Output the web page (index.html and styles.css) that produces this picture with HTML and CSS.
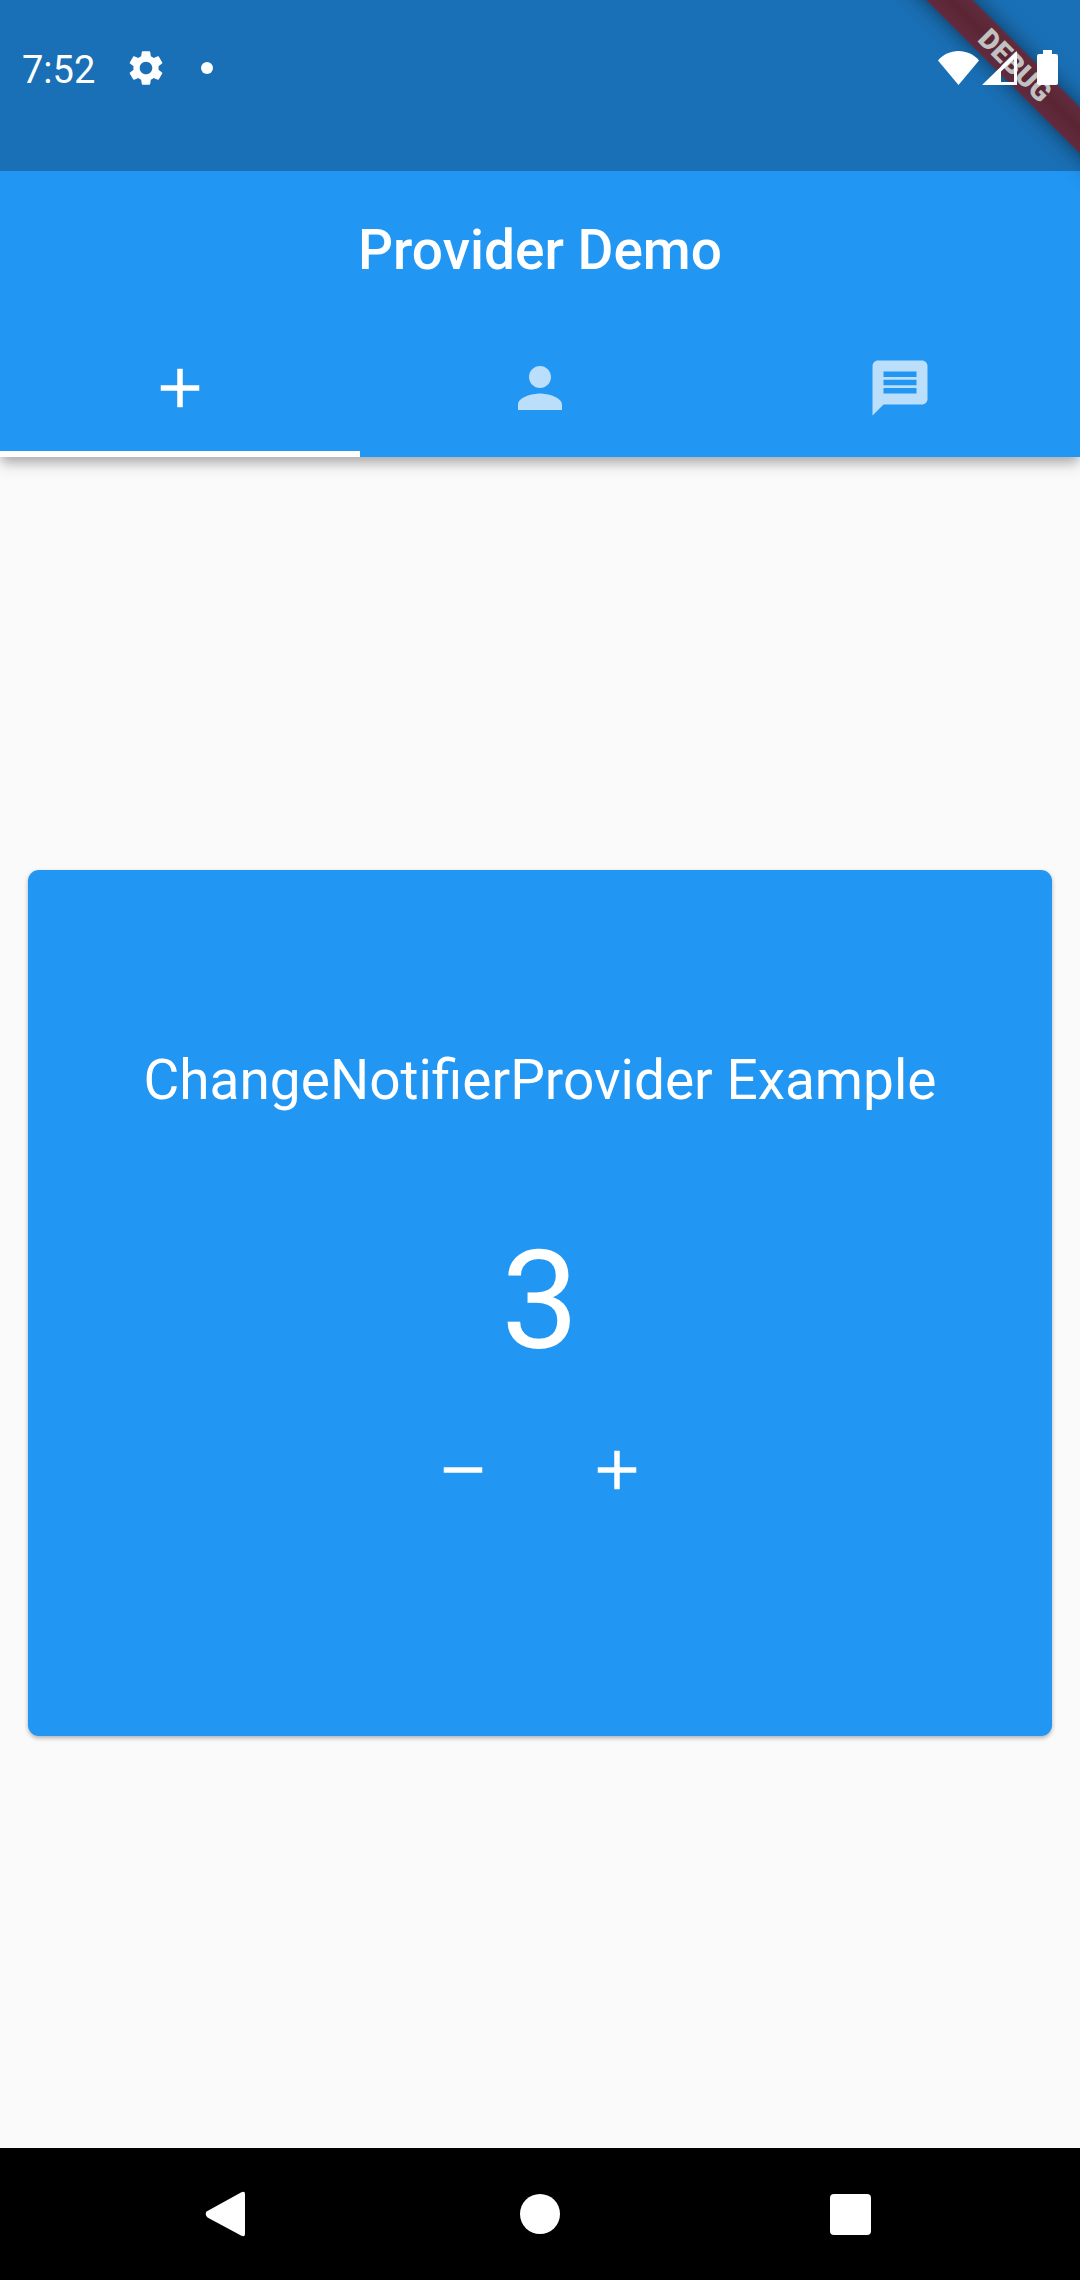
FILE: index.html
```html
<!DOCTYPE html>
<html lang="en">
<head>
<meta charset="utf-8">
<meta name="viewport" content="width=device-width, initial-scale=1">
<title>Provider Demo</title>
<link rel="stylesheet" href="styles.css">
</head>
<body>
<div class="screen">
  <div class="debug-corner"><div class="debug-banner">DEBUG</div></div>

  <header class="app-bar">
    <div class="status-bar">
      <div class="status-left">
        <span class="clock">7:52</span>
        <svg class="gear" viewBox="0 0 24 24" aria-hidden="true"><path d="M19.14 12.94c.04-.3.06-.61.06-.94 0-.32-.02-.64-.07-.94l2.03-1.58c.18-.14.23-.41.12-.61l-1.92-3.32c-.12-.22-.37-.29-.59-.22l-2.39.96c-.5-.38-1.03-.7-1.62-.94l-.36-2.54c-.04-.24-.24-.41-.48-.41h-3.84c-.24 0-.43.17-.47.41l-.36 2.54c-.59.24-1.13.57-1.62.94l-2.39-.96c-.22-.08-.47 0-.59.22L2.74 8.87c-.12.21-.08.47.12.61l2.03 1.58c-.05.3-.09.63-.09.94s.02.64.07.94l-2.03 1.58c-.18.14-.23.41-.12.61l1.92 3.32c.12.22.37.29.59.22l2.39-.96c.5.38 1.03.7 1.62.94l.36 2.54c.05.24.24.41.48.41h3.84c.24 0 .44-.17.47-.41l.36-2.54c.59-.24 1.13-.56 1.62-.94l2.39.96c.22.08.47 0 .59-.22l1.92-3.32c.12-.22.07-.47-.12-.61l-2.01-1.58zM12 15.6c-1.98 0-3.6-1.62-3.6-3.6s1.62-3.6 3.6-3.6 3.6 1.62 3.6 3.6-1.62 3.6-3.6 3.6z"/></svg>
        <span class="dot"></span>
      </div>
      <div class="status-right">
        <svg class="wifi" viewBox="0 0 41 36" aria-hidden="true"><path d="M0 10.500C5 4.500 12.500 1 20.500 1S36 4.500 41 10.500L20.500 35z"/></svg>
        <svg class="signal" viewBox="0 0 35 36" aria-hidden="true"><path fill-rule="evenodd" d="M35 1v34H0zM32 9L19 21.500V32h13z"/></svg>
        <svg class="battery" viewBox="0 0 21 36" aria-hidden="true"><path d="M6 0h9v4h4q2 0 2 2v27q0 2-2 2H2q-2 0-2-2V6q0-2 2-2h4z"/></svg>
      </div>
    </div>
    <h1 class="title">Provider Demo</h1>
    <nav class="tabs" aria-label="Examples">
      <button class="tab tab-active" type="button" aria-label="Counter"><svg class="icon" viewBox="0 0 24 24"><path d="M19 13h-6v6h-2v-6H5v-2h6V5h2v6h6v2z"/></svg></button>
      <button class="tab" type="button" aria-label="Person"><svg class="icon" viewBox="0 0 24 24"><path d="M12 12c2.210 0 4-1.790 4-4s-1.790-4-4-4-4 1.790-4 4 1.790 4 4 4zm0 2c-2.670 0-8 1.340-8 4v2h16v-2c0-2.660-5.330-4-8-4z"/></svg></button>
      <button class="tab" type="button" aria-label="Messages"><svg class="icon" viewBox="0 0 24 24"><path d="M20 2H4c-1.100 0-1.990.9-1.990 2L2 22l4-4h14c1.100 0 2-.9 2-2V4c0-1.100-.9-2-2-2zM6 9h12v2H6V9zm12 5H6v-2h12v2zm0-6H6V6h12v2z"/></svg></button>
    </nav>
  </header>

  <main class="content">
    <section class="card">
      <h2 class="card-title">ChangeNotifierProvider Example</h2>
      <output class="count">3</output>
      <div class="actions">
        <button class="action" type="button" aria-label="Decrease"><svg class="icon" viewBox="0 0 24 24"><path d="M19 13H5v-2h14v2z"/></svg></button>
        <button class="action" type="button" aria-label="Increase"><svg class="icon" viewBox="0 0 24 24"><path d="M19 13h-6v6h-2v-6H5v-2h6V5h2v6h6v2z"/></svg></button>
      </div>
    </section>
  </main>

  <footer class="system-nav">
    <button class="nav-button" type="button" aria-label="Back"><svg class="icon" viewBox="0 0 66 66"><path d="M12.500 30.500L47 11.500Q51 9.500 51 13V53Q51 56.500 47 54.500L13.500 36.500Q10.500 33.500 12.500 30.500z"/></svg></button>
    <button class="nav-button" type="button" aria-label="Home"><svg class="icon" viewBox="0 0 66 66"><circle cx="33" cy="33" r="20"/></svg></button>
    <button class="nav-button" type="button" aria-label="Recent apps"><svg class="icon" viewBox="0 0 66 66"><rect x="10" y="13" width="41" height="41" rx="4"/></svg></button>
  </footer>
</div>
</body>
</html>
```

FILE: styles.css
```css
* {
  box-sizing: border-box;
}

body {
  margin: 0;
  background: #fafafa;
  color: #fff;
  font-family: Roboto, sans-serif;
}

button {
  display: flex;
  align-items: center;
  justify-content: center;
  padding: 0;
  border: 0;
  background: none;
  color: inherit;
}

svg {
  display: block;
  fill: currentColor;
}

.icon {
  width: 66px;
  height: 66px;
}

.screen {
  position: relative;
  display: flex;
  flex-direction: column;
  min-height: 100vh;
}

/* App bar */
.app-bar {
  background: #2196f3;
  box-shadow: 0 6px 10px -2px rgba(0, 0, 0, 0.2), 0 8px 14px rgba(0, 0, 0, 0.16);
}

.status-bar {
  display: flex;
  justify-content: space-between;
  height: 171px;
  padding: 0 22px 36px;
  background: #1a70b6;
}

.status-left,
.status-right {
  display: flex;
  align-items: center;
}

.status-right {
  position: relative;
  z-index: 2;
}

.clock {
  padding-top: 4px;
  font-size: 38px;
  line-height: 46px;
}

.gear {
  width: 42px;
  height: 42px;
  margin: 0 34px 0 30px;
}

.dot {
  width: 12px;
  height: 12px;
  border-radius: 50%;
  background: #fff;
}

.wifi {
  width: 41px;
  height: 36px;
}

.signal {
  width: 35px;
  height: 36px;
  margin: 0 20px 0 3px;
}

.battery {
  width: 21px;
  height: 36px;
}

.title {
  margin: 0;
  padding: 47px 0 43px;
  font-size: 55px;
  font-weight: 500;
  line-height: 64px;
  text-align: center;
}

.tabs {
  display: grid;
  grid-template-columns: repeat(3, 1fr);
}

.tab {
  height: 132px;
  border-bottom: 6px solid transparent;
  color: #bbdefb;
}

.tab-active {
  border-bottom-color: #fff;
  color: #fff;
}

/* Debug ribbon across the top corner */
.debug-corner {
  position: absolute;
  top: 0;
  right: 0;
  z-index: 1;
  width: 231px;
  height: 231px;
  overflow: hidden;
  pointer-events: none;
}

.debug-banner {
  position: absolute;
  top: 49px;
  right: -85px;
  width: 300px;
  height: 33px;
  background: linear-gradient(#622c3f, #5a2533 50%, #622c3f);
  box-shadow: 0 0 22px rgba(0, 0, 0, 0.5);
  color: #c1c1c1;
  font-size: 28px;
  font-weight: 900;
  line-height: 33px;
  text-align: center;
  transform: rotate(45deg);
}

/* Counter card */
.content {
  display: flex;
  flex: 1;
  flex-direction: column;
  justify-content: center;
  padding: 28px;
}

.card {
  display: flex;
  flex-direction: column;
  align-items: center;
  padding: 178px 28px 200px;
  border-radius: 11px;
  background: #2196f3;
  box-shadow: 0 2px 4px rgba(0, 0, 0, 0.3);
}

.card-title {
  margin: 0 0 108px;
  font-size: 55px;
  font-weight: 400;
  line-height: 64px;
}

.count {
  margin-bottom: 22px;
  font-size: 138px;
  line-height: 162px;
}

.actions {
  display: flex;
  gap: 22px;
}

.action {
  width: 132px;
  height: 132px;
}

/* System navigation */
.system-nav {
  display: flex;
  justify-content: center;
  background: #000;
}

.nav-button {
  width: 29%;
  height: 132px;
}
```
